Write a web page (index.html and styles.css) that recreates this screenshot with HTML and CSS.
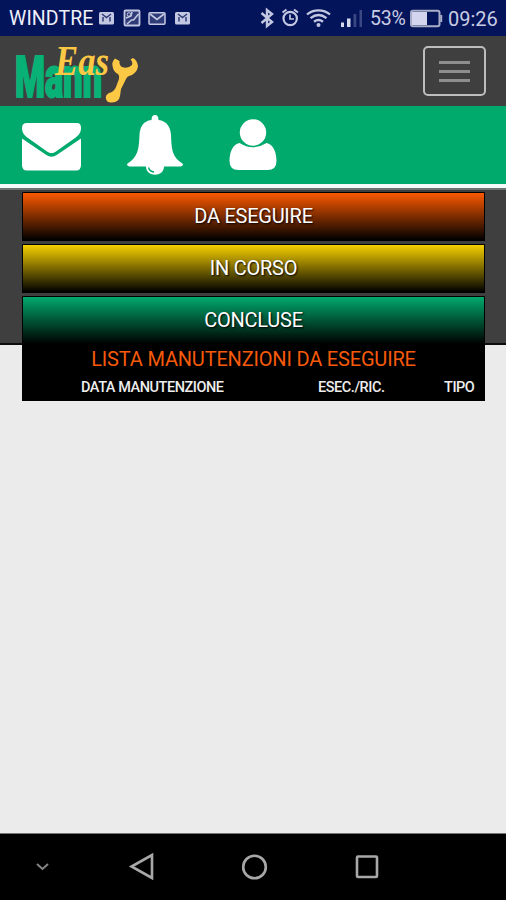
FILE: index.html
```html
<!DOCTYPE html>
<html lang="it">
<head>
    <meta charset="UTF-8">
    <meta name="viewport" content="width=device-width, initial-scale=1.0">
    <title>Easy Mann</title>
    <link rel="stylesheet" href="styles.css">
</head>
<body>
    <div class="statusbar">
        <span class="carrier">WINDTRE</span>
        <svg class="notifications" width="94" height="36" viewBox="98 0 94 36">
            <rect x="99" y="12" width="15" height="12.500" rx="1.5" fill="#c3c8e2"/>
            <path d="M103 21.500v-4.500M110 21.500v-4.500M102 14l4.500 3.500 4.500-3.500" fill="none" stroke="#303c78" stroke-width="1.500"/>
            <rect x="124.500" y="10.500" width="15" height="15" rx="1" fill="#303c78" stroke="#c3c8e2" stroke-width="1.800"/>
            <path d="M127 24l4.500-4 2 0 5-6M126 18l5-2 1-4" fill="none" stroke="#c3c8e2" stroke-width="1.600"/>
            <circle cx="129" cy="14.500" r="1.800" fill="none" stroke="#c3c8e2"/>
            <rect x="149" y="12.700" width="16" height="11.500" rx="1" fill="#303c78" stroke="#c3c8e2" stroke-width="1.500"/>
            <path d="M150 14l7 5.500 7-5.500" fill="none" stroke="#c3c8e2" stroke-width="1.600"/>
            <rect x="175" y="12" width="15" height="12.500" rx="1.500" fill="#c3c8e2"/>
            <path d="M179 21.500v-4.500M186 21.500v-4.500M178 14l4.500 3.500 4.500-3.500" fill="none" stroke="#303c78" stroke-width="1.500"/>
        </svg>
        <svg class="signals" width="106" height="36" viewBox="258 0 106 36">
            <g fill="none" stroke="#c3c8e2">
                <path d="M261.500 13l10.500 9-5 4V10l5 4-10.500 9" stroke-width="2.400"/>
                <circle cx="290.200" cy="18.500" r="6.700" stroke-width="2.200"/>
                <path d="M290 14.500V19h4" stroke-width="1.700"/>
                <path d="M282.500 12.500l4-3M294 9.500l4 3" stroke-width="2"/>
                <path d="M307 14.500c6.500-5.600 16.500-5.600 23 0M310.500 18.200c5-4 11-4 16 0M314 21.700c3-2.200 6-2.200 9 0" stroke-width="2.300"/>
            </g>
            <circle cx="318.500" cy="25" r="2" fill="#c3c8e2"/>
            <path d="M341 22.500h3V27h-3zM347 18.500h3.500V27H347z" fill="#d5d9ed"/>
            <path d="M353.500 14h2.800v13h-2.800zM359.500 10h2.500v17h-2.500z" fill="#3b4783"/>
        </svg>
        <span class="percent">53%</span>
        <svg class="battery" width="34" height="36" viewBox="409 0 34 36">
            <rect x="411" y="10.700" width="28.500" height="15.600" rx="2" fill="#04145a" stroke="#a9aec8" stroke-width="2"/>
            <path d="M412 12h15v13h-15z" fill="#d2d5ed"/>
            <path d="M441.200 15v7" stroke="#a9aec8" stroke-width="2"/>
        </svg>
        <span class="clock">09:26</span>
    </div>

    <header class="navbar">
        <svg class="logo" width="130" height="70" viewBox="14 36 130 70">
            <text class="logo-mann" x="15" y="97" textLength="87" lengthAdjust="spacingAndGlyphs">Mann</text>
            <text class="logo-easy" x="55" y="75" textLength="54" lengthAdjust="spacingAndGlyphs">Eas</text>
            <path class="logo-wrench" d="M115 58.500Q111 62 113 68Q114 72 118 74Q120 76 119 79L116 87Q114 92 109 93Q105 95 106 99Q107 103 112 102.500Q119 102 120 96L121 89L126 79Q127 76 132 75Q138 71 138 66Q137 60 133 58L130.500 59.500Q133 62 132 65Q128 69 122 67Q119 65 119.500 61Z"/>
        </svg>
        <button class="toggler" aria-label="Menu">
            <span class="line"></span>
            <span class="line"></span>
            <span class="line"></span>
        </button>
    </header>

    <nav class="shortcuts">
        <svg class="icon-mail" width="60" height="48" viewBox="0 0 60 48">
            <path d="M5 0h50q4 0 4 5c0 5-3 8-6 10L34 28.500q-4.500 3.500-9 0L6 15C3 13 0 10 0 5q0-5 5-5z"/>
            <path d="M0 15.500l24 16.300q5.500 4 11 0L59 15.500V42q0 5.500-5 5.500H5Q0 47.500 0 42z"/>
        </svg>
        <svg class="icon-bell" width="56" height="60" viewBox="0 0 56 60">
            <path d="M28 0q3.500 0 3.500 5C40 6 43.500 12 44 20c.5 13 1 20 8 26l4 3q0 2-3 2.500H37c0 11-18 11-18 0H3Q0 51 0 49l4-3c7-6 8-13 8.500-26C13 12 16 6 24.500 5Q24.500 0 28 0z"/>
            <path class="clapper" d="M21.500 52.500q1 4 5.500 4.500"/>
        </svg>
        <svg class="icon-user" width="48" height="52" viewBox="0 0 48 52">
            <circle cx="24" cy="13.500" r="13.200"/>
            <path d="M10.500 24q13.500 8.500 27 0C44 25 47.500 33 47.500 42q0 9-9 9h-29Q.5 51 .5 42C.5 33 4 25 10.500 24z"/>
        </svg>
    </nav>

    <main class="content">
        <div class="panel">
            <button class="tab todo">DA ESEGUIRE</button>
            <button class="tab doing">IN CORSO</button>
            <button class="tab done">CONCLUSE</button>
            <div class="list">
                <h1>LISTA MANUTENZIONI DA ESEGUIRE</h1>
                <div class="columns">
                    <span class="col-date">DATA MANUTENZIONE</span>
                    <span class="col-exec">ESEC./RIC.</span>
                    <span class="col-type">TIPO</span>
                </div>
            </div>
        </div>
    </main>

    <footer class="softkeys">
        <svg width="506" height="66" viewBox="0 834 506 66">
            <path d="M37 864l5.500 5 5.500-5" stroke="#858585" stroke-width="2"/>
            <path d="M152 855v23l-20.500-11.500z"/>
            <circle cx="254.500" cy="867" r="11.300"/>
            <rect x="357" y="856.500" width="20" height="20.500" rx="1"/>
        </svg>
    </footer>
</body>
</html>
```
FILE: styles.css
```css
* {
    box-sizing: border-box;
}

body {
    margin: 0;
    height: 900px;
    display: flex;
    flex-direction: column;
    font-family: Roboto, 'Liberation Sans', sans-serif;
    background-color: #ebebeb;
    overflow: hidden;
}

svg {
    display: block;
    flex: none;
}

/* phone status bar */
.statusbar {
    height: 36px;
    display: flex;
    align-items: center;
    background-color: #04145a;
    color: #c8cce4;
    font-size: 20px;
    line-height: 36px;
    white-space: nowrap;
}

.carrier {
    width: 89px;
    margin-left: 9px;
    padding-top: 2px;
    color: #eef0fa;
    font-size: 19.5px;
    letter-spacing: 0.1px;
}

.signals {
    margin-left: 66px;
}

.percent {
    width: 39px;
    margin-left: 6px;
    padding-top: 2px;
    font-size: 19.5px;
    letter-spacing: -0.2px;
}

.clock {
    margin-left: 5px;
    padding-top: 2px;
}

/* header */
.navbar {
    height: 70px;
    padding: 0 20px 0 14px;
    display: flex;
    justify-content: space-between;
    align-items: center;
    background-color: #403f40;
}

.logo {
    overflow: visible;
}

.logo-mann {
    font-family: Roboto, sans-serif;
    font-size: 57px;
    font-weight: 900;
    fill: #08b277;
    stroke: #08b277;
    stroke-width: 2px;
}

.logo-easy {
    font-family: 'Liberation Serif', serif;
    font-size: 43px;
    font-weight: bold;
    font-style: italic;
    fill: #fdc843;
}

.logo-wrench {
    fill: #fdc843;
}

.toggler {
    width: 63px;
    height: 50px;
    padding: 0;
    display: flex;
    flex-direction: column;
    justify-content: center;
    align-items: center;
    gap: 6px;
    background: none;
    border: 2px solid #bdbdbd;
    border-radius: 5px;
}

.line {
    width: 31px;
    height: 3px;
    background-color: #8e8e8e;
}

.shortcuts {
    height: 84px;
    padding: 9px 0 0 22px;
    display: flex;
    align-items: flex-start;
    background-color: #00a96c;
    border-bottom: 2px solid #6d7572;
    box-shadow: inset 0 -4px #f5fbf8;
    fill: #ffffff;
}

.icon-mail {
    margin-top: 8px;
}

.icon-bell {
    margin-left: 45px;
}

.icon-user {
    margin: 4px 0 0 46px;
}

.clapper {
    fill: none;
    stroke: #00a96c;
    stroke-width: 1.3;
}

/* maintenance panel */
.content {
    height: 155px;
    padding: 2px 21px 0 22px;
    background-color: #403f40;
    border-bottom: 2px solid #0c0c0c;
}

.panel {
    display: flex;
    flex-direction: column;
    gap: 3px;
}

.tab {
    height: 49px;
    padding: 0 0 2px;
    border: 1px solid #000000;
    color: #ffffff;
    font-family: inherit;
    font-size: 20px;
    letter-spacing: -0.25px;
    text-shadow: 1px 1px 2px #000000;
}

.todo {
    background: linear-gradient(#fb5900, #000000);
}

.doing {
    background: linear-gradient(#f6d000, #000000);
}

.done {
    background: linear-gradient(#00a96c, #000000);
}

.list {
    height: 56px;
    margin-top: -3px;
    background-color: #000000;
    color: #eeeeee;
}

.list h1 {
    margin: 0;
    height: 31px;
    color: #f65a0a;
    font-size: 20px;
    font-weight: 400;
    letter-spacing: -0.18px;
    line-height: 29px;
    text-align: center;
    white-space: nowrap;
}

.columns {
    display: flex;
    font-size: 14.5px;
    font-weight: 500;
    letter-spacing: -0.45px;
    line-height: 24px;
    white-space: nowrap;
}

.col-date {
    width: 237px;
    margin-left: 59px;
}

.col-exec {
    width: 126px;
}

/* android buttons */
.softkeys {
    height: 67px;
    margin-top: auto;
    border-top: 1px solid #777777;
    background-color: #000000;
}

.softkeys svg {
    fill: none;
    stroke: #a8a8a8;
    stroke-width: 2.6;
}
```
